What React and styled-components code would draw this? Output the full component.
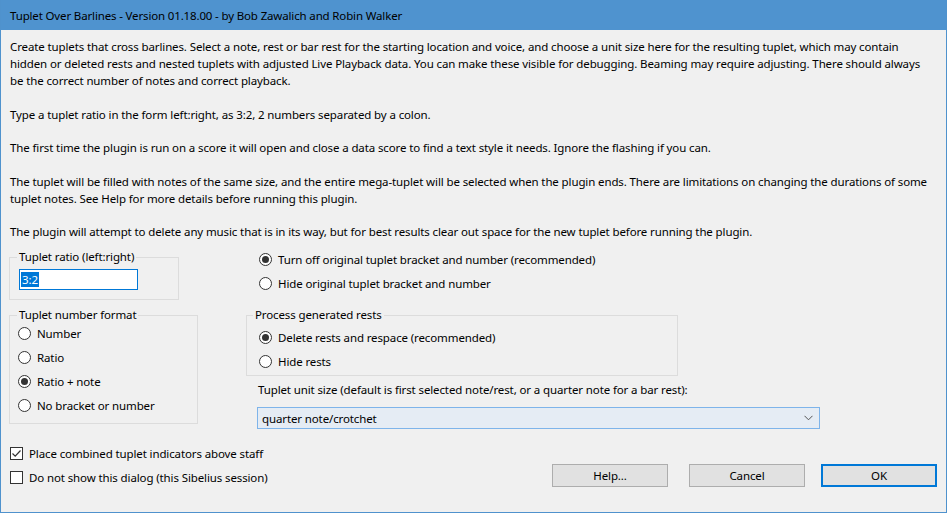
import React from 'react'
import styled, { createGlobalStyle } from 'styled-components'

const GlobalStyle = createGlobalStyle`
  html, body {
    margin: 0;
    padding: 0;
    background: #f0f0f0;
  }
  body {
    font-family: "Noto Sans", "Liberation Sans", sans-serif;
    font-size: 11.5px;
    letter-spacing: -0.12px;
    color: #000;
  }
`

const Window = styled.div`
  width: 947px;
  height: 513px;
  box-sizing: border-box;
  border: 1px solid #4f92cd;
  border-top: 0;
  background: #f0f0f0;
  display: flex;
  flex-direction: column;
  overflow: hidden;
`

const TitleBar = styled.div`
  height: 30px;
  margin: 0 -1px;
  background: #4f93cf;
  display: flex;
  align-items: center;
  padding-left: 10px;
  letter-spacing: -0.15px;
  flex-shrink: 0;
`

const Body = styled.div`
  padding: 8px 8px 0 8px;
  display: flex;
  flex-direction: column;
`

const Para = styled.p`
  margin: 0 0 16.5px 1px;
  line-height: 17px;
  white-space: nowrap;
`

const Form = styled.div`
  display: flex;
  align-items: flex-start;
  margin-top: -7.5px;
`

const LeftCol = styled.div`
  width: 189px;
  display: flex;
  flex-direction: column;
`

const RightCol = styled.div`
  margin-left: 48px;
  display: flex;
  flex-direction: column;
`

const Group = styled.fieldset`
  margin: ${p => p.$mt || 0}px 0 0 0;
  width: ${p => p.$w}px;
  box-sizing: border-box;
  border: 1px solid #dcdcdc;
  padding: 0 0 ${p => p.$pb || 8}px ${p => p.$pl || 8}px;
  min-width: 0;
  display: flex;
  flex-direction: column;
  align-items: flex-start;
`

const Legend = styled.legend`
  padding: 0 2px;
  margin-left: ${p => p.$ml || 0}px;
  line-height: 16px;
  height: 16px;
`

const TextInput = styled.div`
  margin-top: 4px;
  width: 119px;
  height: 21px;
  box-sizing: border-box;
  border: 1px solid #0078d7;
  background: #fff;
  display: flex;
  align-items: center;
  padding-left: 1px;
`

const Selected = styled.span`
  background: #0078d7;
  color: #fff;
  line-height: 15px;
  padding: 0 1px;
`

const OptionRow = styled.label`
  display: flex;
  align-items: center;
  height: 16px;
  margin-top: ${p => p.$mt || 0}px;
  margin-left: ${p => p.$ml || 0}px;
  white-space: nowrap;
`

const RadioCircle = styled.span`
  width: 13px;
  height: 13px;
  box-sizing: border-box;
  border-radius: 50%;
  border: 1px solid #333;
  background: #fff;
  margin-right: 6px;
  display: flex;
  align-items: center;
  justify-content: center;
  flex-shrink: 0;

  &::after {
    content: '';
    width: 7px;
    height: 7px;
    border-radius: 50%;
    background: ${p => (p.$on ? '#333' : 'transparent')};
  }
`

const CheckBox = styled.span`
  width: 13px;
  height: 13px;
  box-sizing: border-box;
  border: 1px solid #333;
  background: #fff;
  margin-right: 6px;
  display: flex;
  align-items: center;
  justify-content: center;
  flex-shrink: 0;
`

const Caption = styled.div`
  height: 16px;
  line-height: 16px;
  margin: 6px 0 0 12px;
  white-space: nowrap;
`

const Select = styled.div`
  margin: 9px 0 0 11px;
  width: 563px;
  height: 22px;
  box-sizing: border-box;
  border: 1px solid #7eb4ea;
  background: #e5ecf4;
  display: flex;
  align-items: center;
  justify-content: space-between;
  padding: 0 6px 0 4px;
`

const Footer = styled.div`
  display: flex;
  justify-content: space-between;
  align-items: flex-start;
  margin-top: 16px;
  padding-right: 1px;
`

const Checks = styled.div`
  display: flex;
  flex-direction: column;
  gap: 8px;
  margin-left: 1px;
`

const Buttons = styled.div`
  display: flex;
  margin-top: 19px;
`

const Button = styled.button`
  width: 116px;
  height: 23px;
  margin-left: ${p => p.$ml || 0}px;
  box-sizing: border-box;
  background: #e1e1e1;
  border: ${p => (p.$default ? '2px solid #0078d7' : '1px solid #adadad')};
  font-family: inherit;
  font-size: 11.5px;
  letter-spacing: -0.12px;
  color: #000;
  padding: 0;
`

const Radio = ({ on, children, mt, ml }) => (
  <OptionRow $mt={mt} $ml={ml}>
    <RadioCircle $on={on} />
    {children}
  </OptionRow>
)

const Check = ({ on, children }) => (
  <OptionRow>
    <CheckBox>
      {on && (
        <svg width="11" height="11" viewBox="0 0 11 11">
          <path d="M1.5 5.5 L4.2 8.2 L9.5 2.5" fill="none" stroke="#333" strokeWidth="1.2" />
        </svg>
      )}
    </CheckBox>
    {children}
  </OptionRow>
)

export default function App() {
  return (
    <>
      <GlobalStyle />
      <Window>
        <TitleBar>Tuplet Over Barlines - Version 01.18.00 - by Bob Zawalich and Robin Walker</TitleBar>
        <Body>
          <Para>
            Create tuplets that cross barlines. Select a note, rest or bar rest for the starting location and voice, and choose a unit size here for the resulting tuplet, which may contain
            <br />
            hidden or deleted rests and nested tuplets with adjusted Live Playback data. You can make these visible for debugging. Beaming may require adjusting. There should always
            <br />
            be the correct number of notes and correct playback.
          </Para>
          <Para>Type a tuplet ratio in the form left:right, as 3:2, 2 numbers separated by a colon.</Para>
          <Para>The first time the plugin is run on a score it will open and close a data score to find a text style it needs. Ignore the flashing if you can.</Para>
          <Para>
            The tuplet will be filled with notes of the same size, and the entire mega-tuplet will be selected when the plugin ends. There are limitations on changing the durations of some
            <br />
            tuplet notes. See Help for more details before running this plugin.
          </Para>
          <Para>The plugin will attempt to delete any music that is in its way, but for best results clear out space for the new tuplet before running the plugin.</Para>

          <Form>
            <LeftCol>
              <Group $w={170} $pl={9} $pb={9}>
                <Legend $ml={-2}>Tuplet ratio (left:right)</Legend>
                <TextInput>
                  <Selected>3:2</Selected>
                </TextInput>
              </Group>
              <Group $w={189} $mt={7} $pl={8} $pb={10}>
                <Legend $ml={-1}>Tuplet number format</Legend>
                <Radio mt={2}>Number</Radio>
                <Radio mt={8}>Ratio</Radio>
                <Radio on mt={8}>Ratio + note</Radio>
                <Radio mt={8}>No bracket or number</Radio>
              </Group>
            </LeftCol>
            <RightCol>
              <Radio on mt={2} ml={13}>Turn off original tuplet bracket and number (recommended)</Radio>
              <Radio mt={8} ml={13}>Hide original tuplet bracket and number</Radio>
              <Group $w={432} $mt={16} $pl={12} $pb={6}>
                <Legend $ml={-6}>Process generated rests</Legend>
                <Radio on mt={6}>Delete rests and respace (recommended)</Radio>
                <Radio mt={8}>Hide rests</Radio>
              </Group>
              <Caption>Tuplet unit size (default is first selected note/rest, or a quarter note for a bar rest):</Caption>
              <Select>
                <span>quarter note/crotchet</span>
                <svg width="9" height="6" viewBox="0 0 9 6">
                  <path d="M0.5 0.8 L4.5 4.8 L8.5 0.8" fill="none" stroke="#555" strokeWidth="1" />
                </svg>
              </Select>
            </RightCol>
          </Form>

          <Footer>
            <Checks>
              <Check on>Place combined tuplet indicators above staff</Check>
              <Check>Do not show this dialog (this Sibelius session)</Check>
            </Checks>
            <Buttons>
              <Button>Help...</Button>
              <Button $ml={21}>Cancel</Button>
              <Button $default $ml={16}>OK</Button>
            </Buttons>
          </Footer>
        </Body>
      </Window>
    </>
  )
}
